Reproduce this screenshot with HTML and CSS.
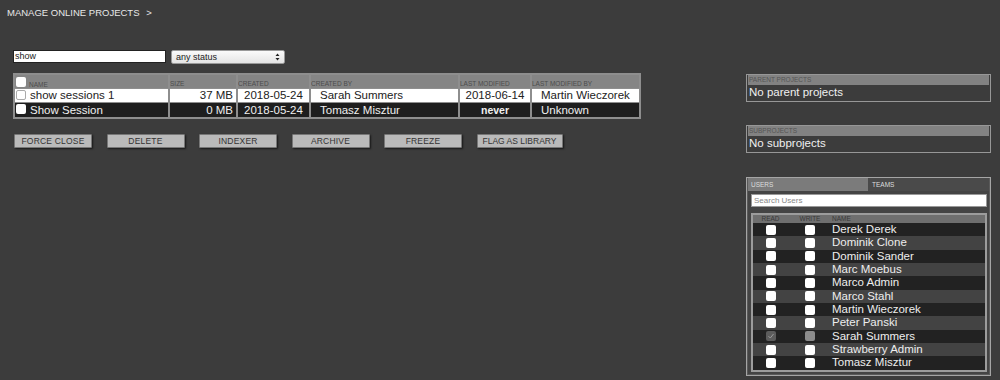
FILE: index.html
```html
<!DOCTYPE html>
<html>
<head>
<meta charset="utf-8">
<link rel="stylesheet" href="styles.css">
</head>
<body>
<div class="title">MANAGE ONLINE PROJECTS <span class="chev">&gt;</span></div>
<div class="main">
  <div class="left">
    <div class="filters">
      <div class="search">show</div>
      <div class="select"><span>any status</span><svg width="5" height="8" viewBox="0 0 5 8"><path d="M0.5 3 L2.5 0.5 L4.5 3 Z M0.5 5 L2.5 7.5 L4.5 5 Z" fill="#222"/></svg></div>
    </div>
    <table class="projects">
      <colgroup>
        <col class="c-name"><col class="c-size"><col class="c-created"><col class="c-by"><col class="c-mod"><col class="c-modby">
      </colgroup>
      <tr class="head">
        <td><span class="cb"></span><span class="lbl lbl-name">NAME</span></td>
        <td><span class="lbl">SIZE</span></td>
        <td><span class="lbl">CREATED</span></td>
        <td><span class="lbl">CREATED BY</span></td>
        <td><span class="lbl">LAST MODIFIED</span></td>
        <td><span class="lbl">LAST MODIFIED BY</span></td>
      </tr>
      <tr class="row light">
        <td><span class="cb cb-border"></span>show sessions 1</td>
        <td class="num">37 MB</td>
        <td class="ctr">2018-05-24</td>
        <td class="pad">Sarah Summers</td>
        <td class="ctr">2018-06-14</td>
        <td class="pad">Martin Wieczorek</td>
      </tr>
      <tr class="row dark">
        <td><span class="cb"></span>Show Session</td>
        <td class="num">0 MB</td>
        <td class="ctr">2018-05-24</td>
        <td class="pad">Tomasz Misztur</td>
        <td class="ctr bold">never</td>
        <td class="pad">Unknown</td>
      </tr>
    </table>
    <div class="buttons">
      <button class="btn">FORCE CLOSE</button>
      <button class="btn">DELETE</button>
      <button class="btn">INDEXER</button>
      <button class="btn">ARCHIVE</button>
      <button class="btn">FREEZE</button>
      <button class="btn btn-wide">FLAG AS LIBRARY</button>
    </div>
  </div>
  <div class="right">
    <div class="box">
      <div class="box-head">PARENT PROJECTS</div>
      <div class="box-body">No parent projects</div>
    </div>
    <div class="box sub">
      <div class="box-head">SUBPROJECTS</div>
      <div class="box-body">No subprojects</div>
    </div>
    <div class="users">
      <div class="tabs">
        <div class="tab active">USERS</div>
        <div class="tab">TEAMS</div>
      </div>
      <div class="users-body">
        <div class="user-search">Search Users</div>
        <div class="list">
          <div class="lrow lhead"><span>READ</span><span>WRITE</span><span class="nm">NAME</span></div>
          <div class="lrow d"><span><i class="cb"></i></span><span><i class="cb"></i></span><span class="nm">Derek Derek</span></div>
          <div class="lrow l"><span><i class="cb"></i></span><span><i class="cb"></i></span><span class="nm">Dominik Clone</span></div>
          <div class="lrow d"><span><i class="cb"></i></span><span><i class="cb"></i></span><span class="nm">Dominik Sander</span></div>
          <div class="lrow l"><span><i class="cb"></i></span><span><i class="cb"></i></span><span class="nm">Marc Moebus</span></div>
          <div class="lrow d"><span><i class="cb"></i></span><span><i class="cb"></i></span><span class="nm">Marco Admin</span></div>
          <div class="lrow l"><span><i class="cb"></i></span><span><i class="cb"></i></span><span class="nm">Marco Stahl</span></div>
          <div class="lrow d"><span><i class="cb"></i></span><span><i class="cb"></i></span><span class="nm">Martin Wieczorek</span></div>
          <div class="lrow l"><span><i class="cb"></i></span><span><i class="cb"></i></span><span class="nm">Peter Panski</span></div>
          <div class="lrow d"><span><i class="cb cb-dis"><svg width="8" height="8" viewBox="0 0 8 8"><path d="M1.5 4.2 L3.3 6 L6.5 2" fill="none" stroke="#999" stroke-width="1"/></svg></i></span><span><i class="cb cb-dis2"></i></span><span class="nm">Sarah Summers</span></div>
          <div class="lrow l"><span><i class="cb"></i></span><span><i class="cb"></i></span><span class="nm">Strawberry Admin</span></div>
          <div class="lrow d"><span><i class="cb"></i></span><span><i class="cb"></i></span><span class="nm">Tomasz Misztur</span></div>
        </div>
      </div>
    </div>
  </div>
</div>
</body>
</html>
```
FILE: styles.css
```css
html, body {
  margin: 0;
  padding: 0;
  background: #3c3c3c;
  font-family: "Liberation Sans", Arial, sans-serif;
  color: #eee;
}
body {
  width: 1000px;
  height: 380px;
  overflow: hidden;
}
.title {
  padding: 7px 0 0 7px;
  height: 14px;
  font-size: 9.5px;
  line-height: 12px;
  color: #e8e8e8;
}
.title .chev {
  margin-left: 4px;
}
.main {
  display: flex;
  padding-top: 29px;
}
.left {
  margin-left: 13px;
  width: 640px;
}
.filters {
  display: flex;
  gap: 5px;
  height: 14px;
}
.search {
  width: 150px;
  height: 11px;
  background: #fff;
  border: 1px solid #222;
  color: #222;
  font-size: 9px;
  line-height: 11px;
  padding-left: 1px;
}
.select {
  width: 104px;
  height: 12px;
  background: linear-gradient(#fafafa, #e4e4e4);
  border-radius: 2px;
  border: 1px solid #999;
  color: #222;
  font-size: 9px;
  line-height: 12px;
  padding: 0 4px;
  display: flex;
  align-items: center;
  justify-content: space-between;
}
.projects {
  margin-top: 9px;
  table-layout: fixed;
  border-collapse: separate;
  border-spacing: 2px 1px;
  background: #8e8e8e;
  padding: 1px 0;
  width: 628px;
  font-size: 11.5px;
}
.c-name { width: 153px; }
.c-size { width: 66px; }
.c-created { width: 71px; }
.c-by { width: 147px; }
.c-mod { width: 70px; }
.c-modby { width: 107px; }
.projects td {
  padding: 0;
  white-space: nowrap;
  overflow: hidden;
}
.head td {
  height: 13px;
  line-height: 9px;
  background: #858585;
  vertical-align: bottom;
}
.lbl {
  font-size: 6.5px;
  color: #4c4c4c;
  line-height: 9px;
  display: inline-block;
  vertical-align: bottom;
}
.lbl-name {
  margin-left: 3px;
  line-height: 7px;
}
.cb {
  display: inline-block;
  width: 10px;
  height: 10px;
  background: #fff;
  border-radius: 2px;
  box-sizing: border-box;
  vertical-align: middle;
}
.head .cb { margin: 1px 0 1px 1px; vertical-align: bottom; }
.cb-border { border: 1px solid #aaa; }
.row td {
  height: 13px;
  line-height: 13px;
}
.row .cb {
  margin: -2px 4px 0 1px;
}
.light td { background: #fff; color: #222; }
.dark td { background: #1e1e1e; color: #f0f0f0; height: 14px; }
.num { text-align: right; padding-right: 3px !important; }
.ctr { text-align: center; }
.pad { padding-left: 9px !important; }
.bold { font-weight: bold; font-size: 10.5px; }
.buttons {
  display: flex;
  gap: 14.5px;
  margin-top: 15px;
  padding-left: 1px;
}
.btn {
  width: 78px;
  height: 14px;
  padding: 0;
  background: #bababa;
  border: 1px solid #777;
  border-radius: 1px;
  color: #333;
  font-family: "Liberation Sans", Arial, sans-serif;
  font-size: 8.5px;
  letter-spacing: 0.2px;
  line-height: 12px;
  white-space: nowrap;
  box-shadow: 1px 1px 2px rgba(0, 0, 0, 0.6);
}
.btn-wide { width: 86px; letter-spacing: 0; }
.right {
  margin-left: auto;
  margin-right: 9px;
  width: 245px;
  padding-top: 24px;
}
.box {
  border: 1px solid #979797;
  padding: 0 1px 1px 1px;
  height: 25px;
}
.box.sub { margin-top: 23px; }
.box-head {
  background: #828282;
  height: 10px;
  font-size: 6.5px;
  line-height: 10px;
  color: #555;
  padding-left: 1px;
}
.box-body {
  font-size: 11.5px;
  line-height: 15px;
  color: #f0f0f0;
  padding-left: 1px;
}
.users {
  margin-top: 24px;
  height: 197px;
  border: 1px solid #a5a5a5;
  box-shadow: inset 0 0 0 1px #5a5a5a;
  padding: 0 1px;
  background: #444;
}
.tabs {
  display: flex;
  height: 13px;
}
.tab {
  font-size: 6.5px;
  line-height: 14px;
  color: #ddd;
  padding-left: 4px;
  background: #4a4a4a;
  flex: 1;
}
.tab.active {
  background: #7b7b7b;
  padding-left: 3px;
  flex: 0 0 117px;
}
.users-body {
  padding: 3px 2px 0 3px;
}
.user-search {
  height: 11px;
  background: #fff;
  border: 1px solid #999;
  color: #888;
  font-size: 8px;
  line-height: 11px;
  padding-left: 2px;
}
.list {
  margin-top: 6px;
  border: 2px solid #9c9c9c;
  background: #444;
}
.lrow {
  display: grid;
  grid-template-columns: 35px 44px 1fr;
  height: 13.33px;
  align-items: center;
  font-size: 11.5px;
  color: #eee;
}
.lrow > span {
  text-align: center;
  line-height: 10px;
}
.lrow .nm { text-align: left; line-height: 13px; }
.lrow.lhead {
  height: 8px;
  background: #6f6f6f;
  font-size: 6.5px;
  color: #3a3a3a;
}
.lrow.lhead > span { line-height: 8px; }
.lrow.d { background: #222; }
.lrow.l { background: #434343; }
.lrow .cb { display: inline-block; vertical-align: top; }
.cb-dis { background: #5c5c5c !important; }
.cb-dis svg { display: block; margin: 1px; }
.cb-dis2 { background: #8c8c8c !important; }
```
